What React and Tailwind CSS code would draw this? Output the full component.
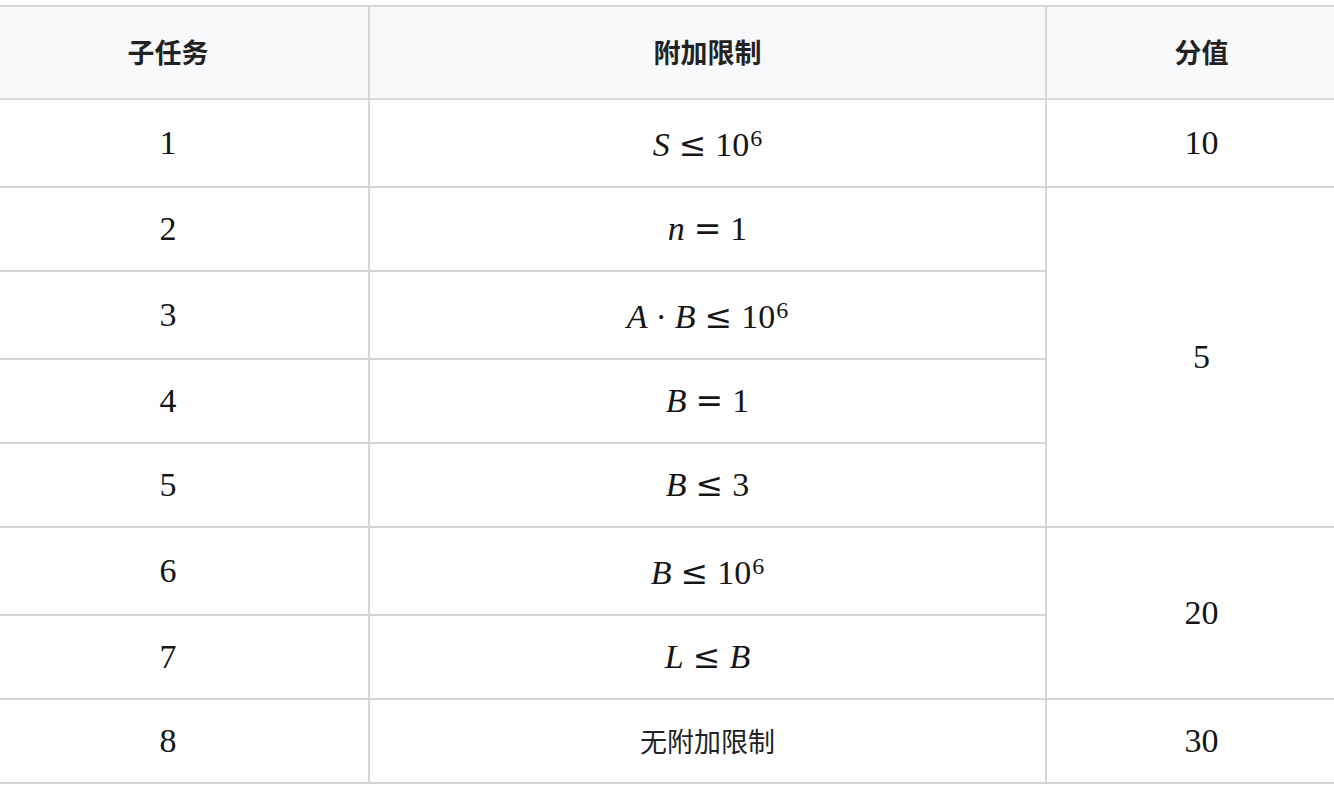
const cjk = { fontFamily: '"Noto Sans CJK SC", "Noto Sans", sans-serif' }

function Rel({ children }) {
  return (
    <span className="mx-[9px] font-['DejaVu_Serif',serif] text-[33px] not-italic">{children}</span>
  )
}

function V({ children }) {
  return <span className="italic">{children}</span>
}

function Sup({ children }) {
  return <sup className="relative top-[2px] ml-[1px] align-super text-[24px] leading-none">{children}</sup>
}

function Math({ children }) {
  return (
    <span className="font-['Liberation_Serif',serif] text-[34px] leading-none text-[#151515]">
      {children}
    </span>
  )
}

const rows = [
  { id: 1, tall: true, limit: <Math><V>S</V><Rel>≤</Rel>10<Sup>6</Sup></Math>, score: '10', span: 1 },
  { id: 2, limit: <Math><V>n</V><Rel>=</Rel>1</Math>, score: '5', span: 4 },
  { id: 3, tall: true, limit: <Math><V>A</V><span className="mx-[8px]">·</span><V>B</V><Rel>≤</Rel>10<Sup>6</Sup></Math> },
  { id: 4, limit: <Math><V>B</V><Rel>=</Rel>1</Math> },
  { id: 5, limit: <Math><V>B</V><Rel>≤</Rel>3</Math> },
  { id: 6, tall: true, limit: <Math><V>B</V><Rel>≤</Rel>10<Sup>6</Sup></Math>, score: '20', span: 2 },
  { id: 7, limit: <Math><V>L</V><Rel>≤</Rel><V>B</V></Math> },
  { id: 8, limit: <span className="text-[27px] text-[#222]" style={cjk}>无附加限制</span>, score: '30', span: 1 },
]

export default function App() {
  return (
    <div className="min-h-screen overflow-hidden bg-white pt-[5px]">
      <table className="-ml-[32px] w-[1388px] table-fixed border-collapse">
        <colgroup>
          <col className="w-[401px]" />
          <col className="w-[677px]" />
          <col className="w-[310px]" />
        </colgroup>
        <thead>
          <tr className="h-[93px] bg-[#f8f9fb] text-[27px] font-bold text-[#222]" style={cjk}>
            <th className="border-y-2 border-r-2 border-[#d6d6d6]">子任务</th>
            <th className="border-y-2 border-x-2 border-[#d6d6d6]">附加限制</th>
            <th className="border-y-2 border-l-2 border-[#d6d6d6]">分值</th>
          </tr>
        </thead>
        <tbody>
          {rows.map((r) => (
            <tr key={r.id} className={r.tall ? 'h-[88px]' : 'h-[84px]'}>
              <td className="border-y-2 border-r-2 border-[#d6d6d6] text-center">
                <Math>{r.id}</Math>
              </td>
              <td className="border-2 border-[#d6d6d6] text-center">{r.limit}</td>
              {r.score && (
                <td rowSpan={r.span} className="border-y-2 border-l-2 border-[#d6d6d6] text-center">
                  <Math>{r.score}</Math>
                </td>
              )}
            </tr>
          ))}
        </tbody>
      </table>
    </div>
  )
}
